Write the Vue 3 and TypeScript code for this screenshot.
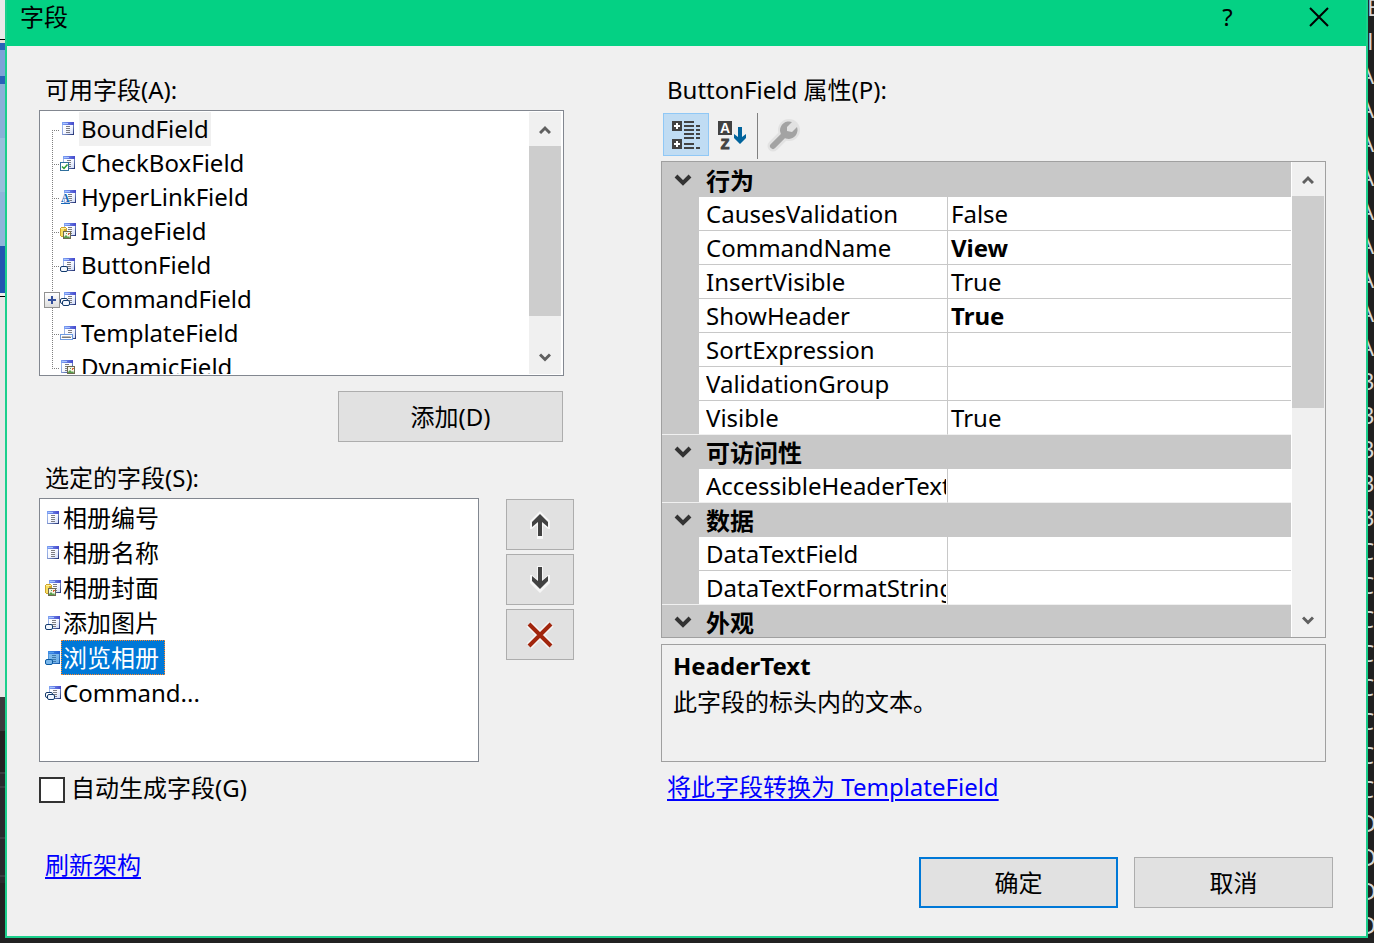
<script setup lang="ts">
import { ref } from 'vue'

interface FieldItem {
  name: string
  icon: string
  expandable?: boolean
}
interface PropertyRow {
  name: string
  value: string
  changed?: boolean
}
interface PropertyGroup {
  title: string
  rows: PropertyRow[]
}

const available: FieldItem[] = [
  { name: 'BoundField', icon: 'bound' },
  { name: 'CheckBoxField', icon: 'check' },
  { name: 'HyperLinkField', icon: 'link' },
  { name: 'ImageField', icon: 'image' },
  { name: 'ButtonField', icon: 'button' },
  { name: 'CommandField', icon: 'command', expandable: true },
  { name: 'TemplateField', icon: 'template' },
  { name: 'DynamicField', icon: 'dynamic' },
]

const chosen: FieldItem[] = [
  { name: '相册编号', icon: 'bound' },
  { name: '相册名称', icon: 'bound' },
  { name: '相册封面', icon: 'image' },
  { name: '添加图片', icon: 'button' },
  { name: '浏览相册', icon: 'button' },
  { name: 'Command...', icon: 'command' },
]

const groups: PropertyGroup[] = [
  {
    title: '行为',
    rows: [
      { name: 'CausesValidation', value: 'False' },
      { name: 'CommandName', value: 'View', changed: true },
      { name: 'InsertVisible', value: 'True' },
      { name: 'ShowHeader', value: 'True', changed: true },
      { name: 'SortExpression', value: '' },
      { name: 'ValidationGroup', value: '' },
      { name: 'Visible', value: 'True' },
    ],
  },
  { title: '可访问性', rows: [{ name: 'AccessibleHeaderText', value: '' }] },
  {
    title: '数据',
    rows: [
      { name: 'DataTextField', value: '' },
      { name: 'DataTextFormatString', value: '' },
    ],
  },
  { title: '外观', rows: [] },
]

const behindRight = 'EIAAAAAAAAABBBBBCCCCCCCCDDDD'.split('')
const activeAvailable = ref(0)
const activeChosen = ref(4)
const autoGenerate = ref(false)
</script>

<template>
  <div class="desktop">
    <svg class="defs" width="0" height="0" aria-hidden="true">
      <defs>
        <linearGradient id="cap" x1="0" x2="1" y1="0" y2="0">
          <stop offset="0" stop-color="#7fa4f4" />
          <stop offset="1" stop-color="#4548cc" />
        </linearGradient>
        <linearGradient id="sheet" x1="0" x2="1" y1="0" y2="1">
          <stop offset="0" stop-color="#ffffff" />
          <stop offset="0.500" stop-color="#f6f8ff" />
          <stop offset="1" stop-color="#d3ddf8" />
        </linearGradient>
        <linearGradient id="edge" x1="0" x2="1" y1="0" y2="1">
          <stop offset="0" stop-color="#a9c2f2" />
          <stop offset="0.450" stop-color="#8fa6de" />
          <stop offset="1" stop-color="#1f2d6e" />
        </linearGradient>
        <filter id="picked-tint" color-interpolation-filters="sRGB">
          <feColorMatrix type="matrix" values="0.5 0 0 0 0  0 0.5 0 0 0.235  0 0 0.5 0 0.42  0 0 0 1 0" />
        </filter>
        <g id="form">
          <rect x="0" y="0" width="12" height="13" fill="url(#edge)" />
          <rect x="1" y="3" width="10" height="9" fill="url(#sheet)" />
          <rect x="0" y="0" width="12" height="3" fill="url(#cap)" />
          <path d="M1 1h5v1h-5z" fill="#a9c4ff" />
          <path d="M4 4h4v1h-4zM4 6h4v1h-4zM4 8h4v1h-4zM4 10h4v1h-4z" fill="#7c7c82" />
        </g>
        <g id="photo">
          <rect x="0" y="0" width="8" height="8" fill="#6e6a50" />
          <rect x="1" y="1" width="6" height="6" fill="#f6f3e6" />
          <path d="M1 7v-1l2-2 2 2 1-1 1 2z" fill="#5aa04e" />
          <path d="M3 2h1v1h-1z" fill="#5aa04e" />
          <path d="M5 2h2v1h-1v1h-1z" fill="#d8683a" />
        </g>
        <symbol id="i-bound" viewBox="0 0 16 16"><use href="#form" x="2" y="1" /></symbol>
        <symbol id="i-check" viewBox="0 0 16 16">
          <use href="#form" x="3" y="1" />
          <rect x="0.500" y="7.500" width="8" height="8" fill="#fff" stroke="#2f6f9c" />
          <path d="M2 11.500l2 2 3.500-4" fill="none" stroke="#2c9b35" stroke-width="1.500" />
        </symbol>
        <symbol id="i-link" viewBox="0 0 16 16">
          <use href="#form" x="4" y="1" />
          <text x="1" y="13" font-family="Liberation Serif" font-weight="700" font-size="12" fill="#1667b7" stroke="#fff" stroke-width="1" paint-order="stroke">A</text>
          <rect x="1" y="14" width="9" height="1" fill="#1667b7" />
        </symbol>
        <symbol id="i-image" viewBox="0 0 16 16">
          <use href="#form" x="4" y="0" />
          <path d="M0 5h1v-1h5v1h1v8h-1v1h-5v-1h-1z" fill="#d0a62c" />
          <rect x="1" y="5" width="3" height="8" fill="#f8df62" />
          <rect x="1" y="5" width="5" height="1" fill="#fff1a0" />
          <use href="#photo" x="3" y="8" />
        </symbol>
        <symbol id="i-button" viewBox="0 0 16 16">
          <use href="#form" x="3" y="1" />
          <rect x="0.500" y="9.500" width="7" height="5" rx="1.500" fill="#f2f7ff" stroke="#123a6c" />
        </symbol>
        <symbol id="i-command" viewBox="0 0 16 16">
          <use href="#form" x="4" y="1" />
          <rect x="0.500" y="7.500" width="7" height="5" rx="1.500" fill="#fff" stroke="#123a6c" />
          <rect x="2.500" y="9.500" width="7" height="5" rx="1.500" fill="#f2f7ff" stroke="#123a6c" />
        </symbol>
        <symbol id="i-template" viewBox="0 0 16 16">
          <use href="#form" x="4" y="1" />
          <rect x="0.500" y="9.500" width="12" height="5" fill="#fff" stroke="#6d9be0" />
          <path d="M2 13l1-1.500 1 1.500 1-1.500 1 1.500 1-1.500 1 1.500 1-1.500 1 1.500 1-1.500" fill="none" stroke="#444" stroke-width="0.800" />
        </symbol>
        <symbol id="i-dynamic" viewBox="0 0 16 16">
          <use href="#form" x="1" y="1" />
          <use href="#photo" x="7" y="7" />
        </symbol>
      </defs>
    </svg>

    <div class="behind-left" aria-hidden="true"></div>

    <main class="dialog">
      <header class="titlebar">
        <h1>字段</h1>
        <button class="caption" type="button" aria-label="帮助">?</button>
        <button class="caption" type="button" aria-label="关闭">
          <svg width="20" height="20" viewBox="0 0 20 20"><path d="M1 1L19 19M19 1L1 19" stroke="#000" stroke-width="2" /></svg>
        </button>
      </header>

      <div class="content">
        <section class="left">
          <h2 id="available-label">可用字段(A):</h2>
          <div class="box tree-box">
            <ul class="tree" role="tree" aria-labelledby="available-label">
              <li v-for="(f, i) in available" :key="f.name" role="treeitem" :aria-selected="i === activeAvailable" @click="activeAvailable = i">
                <span class="gutter">
                  <svg width="20" height="34" viewBox="0 0 20 34">
                    <path v-if="i > 0" d="M12.500 0V18" class="dots" />
                    <path v-if="i < available.length - 1" d="M12.500 18V34" class="dots" />
                    <path d="M12 18.500H19" class="dots" />
                  </svg>
                  <button v-if="f.expandable" class="expander" type="button" aria-label="展开">
                    <svg width="8" height="8" viewBox="0 0 8 8"><path d="M0 4H8M4 0V8" stroke="#34509c" stroke-width="2" /></svg>
                  </button>
                </span>
                <svg class="icon" width="16" height="16"><use :href="'#i-' + f.icon" /></svg>
                <span class="name" :class="{ soft: i === activeAvailable }">{{ f.name }}</span>
              </li>
            </ul>
            <div class="scroll">
              <button type="button" aria-label="向上滚动"><svg width="12" height="9" viewBox="0 0 12 9"><path d="M1 8L6 3L11 8" /></svg></button>
              <span class="thumb tree-thumb"></span>
              <button class="end" type="button" aria-label="向下滚动"><svg width="12" height="9" viewBox="0 0 12 9"><path d="M1 1.500L6 6.500L11 1.500" /></svg></button>
            </div>
          </div>
          <button class="push add" type="button">添加(D)</button>

          <h2 id="chosen-label" class="second">选定的字段(S):</h2>
          <div class="chosen-row">
            <ul class="box chosen" role="listbox" aria-labelledby="chosen-label">
              <li v-for="(f, i) in chosen" :key="f.name" role="option" :aria-selected="i === activeChosen" @click="activeChosen = i">
                <svg class="icon" :class="{ tinted: i === activeChosen }" width="16" height="16"><use :href="'#i-' + f.icon" /></svg>
                <span class="name" :class="{ picked: i === activeChosen }">{{ f.name }}</span>
              </li>
            </ul>
            <div class="order">
              <button class="push" type="button" aria-label="上移">
                <svg width="24" height="28" viewBox="0 0 24 28">
                  <path d="M12 0L22 10V18H20L15 14V28H9V14L4 18H2V10Z" fill="#f6f6f6" />
                  <path d="M12 3L20 11V16L14 11V25H10V11L4 16V11Z" fill="#424242" />
                </svg>
              </button>
              <button class="push" type="button" aria-label="下移">
                <svg width="24" height="28" viewBox="0 0 24 28">
                  <path d="M12 27L22 17V9H20L15 13V0H9V13L4 9H2V17Z" fill="#f6f6f6" />
                  <path d="M12 23L20 15V10L14 15V1H10V15L4 10V15Z" fill="#424242" />
                </svg>
              </button>
              <button class="push" type="button" aria-label="删除">
                <svg width="28" height="28" viewBox="0 0 28 28">
                  <path d="M3 3L25 25M25 3L3 25" stroke="#f6f6f6" stroke-width="7" />
                  <path d="M3 3L25 25M25 3L3 25" stroke="#a1260d" stroke-width="4" />
                </svg>
              </button>
            </div>
          </div>
          <div class="auto">
            <input id="auto-generate" v-model="autoGenerate" type="checkbox" />
            <label for="auto-generate">自动生成字段(G)</label>
          </div>
          <a class="refresh" href="#">刷新架构</a>
        </section>

        <section class="right">
          <h2>ButtonField 属性(P):</h2>
          <div class="toolbar">
            <button class="tool on" type="button" aria-label="按分类顺序">
              <svg width="28" height="28" viewBox="0 0 28 28" shape-rendering="crispEdges">
                <path d="M0 0h10v10H0zM0 18h10v10H0z" fill="#424242" />
                <path d="M2 4h6v2H2zM4 2h2v6H4zM2 22h6v2H2zM4 20h2v6H4z" fill="#fff" />
                <path d="M12 0h10v2H12zM12 4h10v2H12zM12 8h10v2H12zM12 12h10v2H12zM12 16h10v2H12zM12 22h10v2H12zM12 26h10v2H12zM24 4h4v2h-4zM24 8h4v2h-4zM24 12h4v2h-4zM24 16h4v2h-4zM24 26h4v2h-4z" fill="#424242" />
              </svg>
            </button>
            <button class="tool" type="button" aria-label="按字母顺序">
              <svg width="30" height="30" viewBox="0 0 30 30">
                <rect x="1" y="1" width="14" height="14" fill="#424242" />
                <text x="8" y="13" text-anchor="middle" class="az" fill="#fff">A</text>
                <text x="8" y="29" text-anchor="middle" class="az" fill="#424242" stroke="#424242">Z</text>
                <path d="M21 7h4v10l4-3v4l-6 6-6-6v-4l4 3z" fill="#00639c" />
              </svg>
            </button>
            <span class="divider"></span>
            <button class="tool" type="button" aria-label="属性页" disabled>
              <svg width="34" height="34" viewBox="0 0 34 34">
                <path d="M6 28L17 17" fill="none" stroke="#e2e2e2" stroke-width="11" stroke-linecap="round" />
                <circle cx="22" cy="12" r="11" fill="#e2e2e2" />
                <path d="M6 28L17 17" fill="none" stroke="#a3a3a3" stroke-width="6" stroke-linecap="round" />
                <path d="M25 4A9 9 0 0 0 13 13A9 9 0 0 0 22 21A9 9 0 0 0 30 9L25 14L20 13L20 9Z" fill="#a3a3a3" />
              </svg>
            </button>
          </div>

          <div class="grid-box">
            <div class="grid-view">
              <table>
                <colgroup><col class="c-gutter" /><col class="c-name" /><col /></colgroup>
                <tbody v-for="g in groups" :key="g.title">
                  <tr class="category">
                    <td><svg width="18" height="12" viewBox="0 0 18 12"><path d="M2 2L9 9L16 2" fill="none" stroke="#333" stroke-width="4" /></svg></td>
                    <th colspan="2" scope="rowgroup">{{ g.title }}</th>
                  </tr>
                  <tr v-for="r in g.rows" :key="r.name" class="prop">
                    <td></td>
                    <th scope="row"><div class="clip">{{ r.name }}</div></th>
                    <td class="value" :class="{ changed: r.changed }">{{ r.value }}</td>
                  </tr>
                </tbody>
              </table>
            </div>
            <div class="scroll">
              <button type="button" aria-label="向上滚动"><svg width="12" height="9" viewBox="0 0 12 9"><path d="M1 8L6 3L11 8" /></svg></button>
              <span class="thumb grid-thumb"></span>
              <button class="end" type="button" aria-label="向下滚动"><svg width="12" height="9" viewBox="0 0 12 9"><path d="M1 1.500L6 6.500L11 1.500" /></svg></button>
            </div>
          </div>

          <div class="help">
            <h3>HeaderText</h3>
            <p>此字段的标头内的文本。</p>
          </div>
          <a class="convert" href="#">将此字段转换为 TemplateField</a>
          <footer class="actions">
            <button class="push primary" type="button">确定</button>
            <button class="push" type="button">取消</button>
          </footer>
        </section>
      </div>
    </main>

    <div class="behind-right" aria-hidden="true">
      <span v-for="(c, i) in behindRight" :key="i" :class="{ inset: i < 2 }">{{ c }}</span>
    </div>
  </div>
</template>

<style>
html,
body {
  background: #222;
}
</style>

<style scoped>
.desktop {
  display: flex;
  height: 100vh;
  min-height: 943px;
  box-sizing: border-box;
  padding-bottom: 5px;
  background: #222;
  overflow: hidden;
  color: #000;
  font: 24px/34px "Noto Sans", "Noto Sans CJK SC", sans-serif;
}
.defs {
  position: absolute;
}
.behind-left {
  flex: 0 0 5px;
  background: linear-gradient(
    #e9e9e9 0 39px, #000 39px 40px, #e8dcd8 40px 43px, #2a62b8 43px 50px, #7da2d8 50px 76px, #2a62b8 76px 84px,
    #8ab0d8 84px 138px, #98bfdc 138px 192px, #8fb4da 192px 246px, #2255b0 246px 293px, #eee 293px 296px, #000 296px 297px,
    #e6e6e6 297px 697px, #3a3a3d 697px 731px, #222 731px 772px, #3c3c40 772px 774px, #2a2a2d 774px 786px, #3c3c40 786px 788px,
    #2a2a2d 788px 837px, #3c3c40 837px 839px, #2a2a2d 839px 875px, #3c3c40 875px 877px, #2a2a2d 877px 883px, #222 883px
  );
}
.behind-right {
  flex: 0 0 6px;
  overflow: hidden;
  color: #d6d6d6;
  background: #202020;
  font-family: "Open Sans", sans-serif;
}
.behind-right span {
  display: block;
  height: 34px;
  text-indent: -9px;
}
.behind-right span:first-child {
  margin-top: -10px;
}
.behind-right span.inset {
  text-indent: -1px;
}
.dialog {
  flex: 1;
  min-width: 0;
  display: flex;
  flex-direction: column;
  box-sizing: border-box;
  border: 2px solid #1bcf8c;
  border-top: 0;
  background: #f0f0f0;
}
h1,
h2,
h3,
p,
ul {
  margin: 0;
  padding: 0;
  font-size: 24px;
  font-weight: 400;
  list-style: none;
}
button {
  font: inherit;
  color: inherit;
  padding: 0;
  margin: 0;
  border: 0;
  background: none;
}
svg {
  display: block;
  flex: none;
}
.titlebar {
  display: flex;
  align-items: center;
  height: 34px;
  padding: 0 2px 12px 13px;
  background: #04d184;
}
.titlebar h1 {
  flex: 1;
}
.caption {
  display: flex;
  align-items: center;
  justify-content: center;
  width: 91px;
  height: 34px;
}
.content {
  flex: 1;
  display: flex;
  gap: 87px;
  padding: 27px 40px 0 32px;
}
.left {
  flex: 0 0 535px;
}
.right {
  flex: 1;
  min-width: 0;
}
h2 {
  padding-left: 6px;
  height: 37px;
}
h2.second {
  margin-top: 19px;
}
.box {
  box-sizing: border-box;
  border: 1px solid #828790;
  background: #fff;
}
.tree-box {
  display: flex;
  height: 266px;
  width: 525px;
  padding: 1px 2px 1px 0;
}
.tree {
  flex: 1;
  overflow: hidden;
}
.tree li,
.chosen li {
  display: flex;
  align-items: center;
}
.gutter {
  position: relative;
  width: 20px;
  height: 34px;
}
.dots {
  stroke: #808080;
  stroke-dasharray: 1 1;
}
.expander {
  position: absolute;
  left: 4px;
  top: 10px;
  width: 16px;
  height: 16px;
  display: flex;
  align-items: center;
  justify-content: center;
  border: 1px solid #919191;
  background: linear-gradient(#fff, #dcdcdc);
}
.name {
  height: 34px;
  line-height: 34px;
  padding: 0 2px;
}
.tree .name {
  margin-left: 3px;
}
.soft {
  background: #f0f0f0;
}
.scroll {
  flex: 0 0 32px;
  display: flex;
  flex-direction: column;
  background: #f0f0f0;
}
.scroll button {
  display: flex;
  align-items: center;
  justify-content: center;
  height: 34px;
}
.scroll .end {
  margin-top: auto;
}
.scroll path {
  fill: none;
  stroke: #606060;
  stroke-width: 3;
}
.thumb {
  background: #cdcdcd;
}
.tree-thumb {
  height: 170px;
}
.grid-thumb {
  height: 212px;
}
.push {
  display: flex;
  align-items: center;
  justify-content: center;
  box-sizing: border-box;
  height: 51px;
  border: 1px solid #adadad;
  background: #e1e1e1;
}
.add {
  width: 225px;
  margin: 15px 0 0 299px;
}
.chosen-row {
  display: flex;
  justify-content: space-between;
}
.chosen {
  width: 440px;
  height: 264px;
  padding: 1px 5px;
}
.chosen .name {
  height: 35px;
  line-height: 35px;
}
.chosen .picked {
  color: #fff;
  background: #0078d7;
  outline: 1px dotted #ff8728;
  outline-offset: -1px;
  padding-right: 6px;
}
.tinted {
  filter: url(#picked-tint);
}
.order {
  display: flex;
  flex-direction: column;
  gap: 4px;
  width: 68px;
  padding-top: 1px;
}
.auto {
  display: flex;
  align-items: flex-end;
  gap: 6px;
  height: 34px;
  margin-top: 7px;
}
.auto label {
  height: 32px;
}
.auto input {
  appearance: none;
  box-sizing: border-box;
  width: 26px;
  height: 26px;
  margin: 0;
  border: 2px solid #333;
  background: #fff;
}
.auto input:checked {
  background: #333;
}
a {
  color: #00f;
  text-decoration: underline;
  text-decoration-thickness: 2px;
  text-underline-offset: 3px;
}
.refresh,
.convert {
  display: block;
  width: fit-content;
  margin-left: 6px;
}
.refresh {
  margin-top: 45px;
}
.convert {
  margin-top: 8px;
}
.toolbar {
  display: flex;
  height: 46px;
  margin-top: 3px;
  padding-left: 2px;
}
.tool {
  display: flex;
  align-items: center;
  justify-content: center;
  box-sizing: border-box;
  width: 46px;
  height: 43px;
  border: 1px solid transparent;
}
.tool.on {
  border-color: #90c8f6;
  background: #c0dcf3;
}
.az {
  font: 700 14px "Liberation Sans", sans-serif;
}
.divider {
  width: 1px;
  height: 46px;
  margin: 0 3px 0 2px;
  background: #808080;
}
.grid-box {
  display: flex;
  box-sizing: border-box;
  height: 477px;
  margin-top: 2px;
  padding-right: 1px;
  border: 1px solid #a0a0a0;
}
.grid-view {
  flex: 1;
  min-width: 0;
  overflow: hidden;
  padding-top: 1px;
  border-right: 1px solid #fff;
  background: #c8c8c8;
}
table {
  width: 100%;
  table-layout: fixed;
  border-collapse: separate;
  border-spacing: 0;
}
.c-gutter {
  width: 37px;
}
.c-name {
  width: 249px;
}
tr {
  height: 34px;
}
td,
th {
  box-sizing: border-box;
  height: 34px;
  padding: 0;
  text-align: left;
  font-weight: 400;
  line-height: 33px;
  white-space: nowrap;
}
.category td {
  padding: 0 0 0 12px;
}
.category th {
  padding-left: 7px;
  font-weight: 700;
}
.prop th {
  padding-left: 7px;
  border-right: 1px solid #c8c8c8;
  border-bottom: 1px solid #c8c8c8;
  background: #fff;
}
.clip {
  height: 33px;
  margin-right: 1px;
  overflow: hidden;
}
.prop .value {
  padding-left: 3px;
  border-bottom: 1px solid #c8c8c8;
  background: #fff;
}
.prop:last-child th,
.prop:last-child td {
  border-bottom: 1px solid #f0f0f0;
}
.value.changed {
  font-weight: 700;
}
.help {
  box-sizing: border-box;
  height: 118px;
  margin-top: 6px;
  padding: 4px 11px;
  border: 1px solid #a0a0a0;
}
.help h3 {
  font-weight: 700;
}
.help p {
  line-height: 37px;
}
.actions {
  display: flex;
  justify-content: flex-end;
  gap: 16px;
  margin: 53px -7px 0 0;
}
.actions .push {
  width: 199px;
}
.push.primary {
  border: 2px solid #0078d7;
}
</style>
